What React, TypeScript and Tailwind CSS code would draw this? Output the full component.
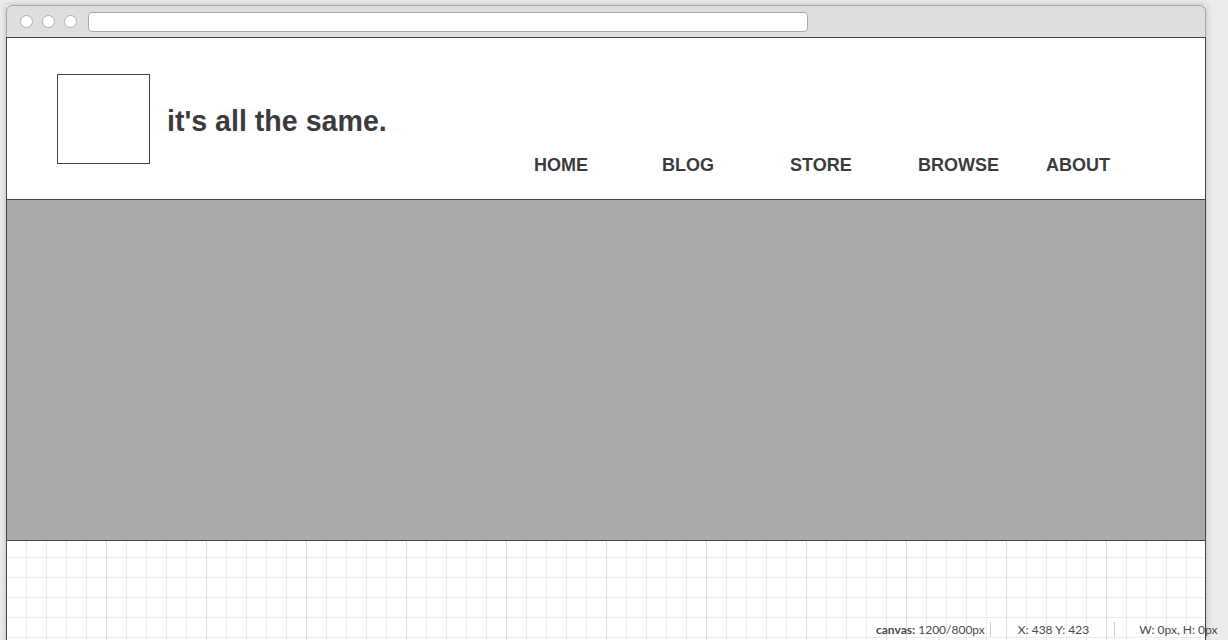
import React from "react";

const navItems = ["HOME", "BLOG", "STORE", "BROWSE", "ABOUT"];

function BrowserChrome() {
    return (
        <div className="flex h-[32px] items-center rounded-t-[6px] border border-b-0 border-[#a9a9a9] bg-[#dedede] pl-[13px]">
            <div className="flex items-center gap-[9px]">
                <span className="h-[13px] w-[13px] rounded-full border border-[#b0b0b0] bg-white" />
                <span className="h-[13px] w-[13px] rounded-full border border-[#b0b0b0] bg-white" />
                <span className="h-[13px] w-[13px] rounded-full border border-[#b0b0b0] bg-white" />
            </div>
            <div className="ml-[11px] h-[20px] w-[720px] rounded-[4px] border border-[#aaaaaa] bg-white" />
        </div>
    );
}

function Header() {
    return (
        <header className="flex h-[162px] items-start border-b border-[#444] bg-white pl-[50px] pr-[31px]">
            <div className="mt-[36px] h-[90px] w-[93px] border border-[#444]" />
            <h1 className="ml-[17px] mt-[67px] font-['Liberation_Sans',Arial,sans-serif] text-[28.6px] font-bold leading-[32px] text-[#3c3c3c]">
                it's all the same.
            </h1>
            <nav className="ml-auto mt-[117px] flex">
                {navItems.map((item) => (
                    <a
                        key={item}
                        className="w-[128px] font-['Liberation_Sans',Arial,sans-serif] text-[18px] font-bold leading-[20px] text-[#3c3c3c]"
                    >
                        {item}
                    </a>
                ))}
            </nav>
        </header>
    );
}

function StatusBar() {
    return (
        <div className="absolute left-[876px] top-[622px] flex h-[15px] items-center whitespace-nowrap font-['Lato','Open_Sans',sans-serif] text-[12px] leading-[15px] text-[#4a4a4a]">
            <span className="pr-[5px]">
                <b className="font-bold">canvas:</b> 1200/800px
            </span>
            <span className="h-[15px] w-px bg-[#cfcfcf]" />
            <span className="pl-[27px] pr-[25px]">X: 438 Y: 423</span>
            <span className="h-[15px] w-px bg-[#cfcfcf]" />
            <span className="pl-[24px]">W: 0px, H: 0px</span>
        </div>
    );
}

export default function App() {
    return (
        <div className="relative h-[640px] w-[1228px] overflow-hidden bg-[#ececec] pl-[6px] pt-[5px]">
            <div className="w-[1200px] shadow-[0_0_6px_rgba(0,0,0,0.22)]">
                <BrowserChrome />
                <div className="border-x border-t border-[#444]">
                    <Header />
                    <section className="h-[341px] border-b border-[#444] bg-[#aaaaaa]" />
                    <div className="h-[120px] bg-white bg-[linear-gradient(to_right,#dddddd_1px,transparent_1px),linear-gradient(to_right,#ececec_1px,transparent_1px),linear-gradient(to_bottom,#ececec_1px,transparent_1px)] bg-[size:100px_100px,20px_20px,20px_20px] bg-[position:99px_0,19px_0,0_16px]" />
                </div>
            </div>
            <StatusBar />
        </div>
    );
}
